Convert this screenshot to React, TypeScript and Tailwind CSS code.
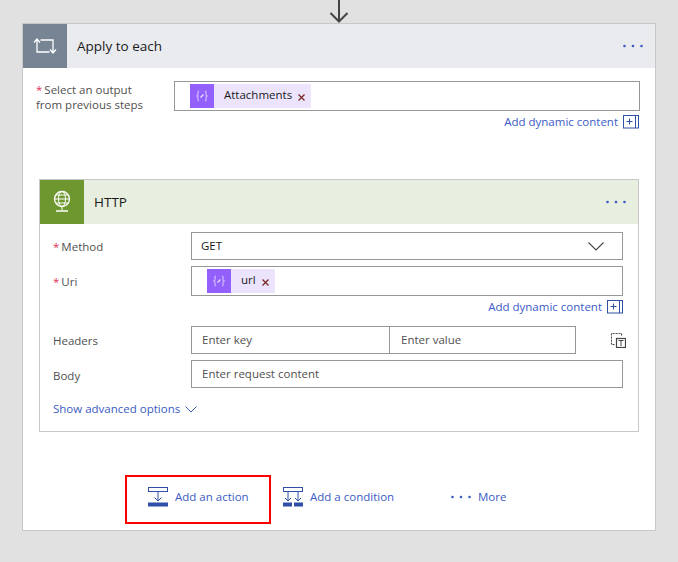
import React, { ReactNode } from 'react';

const font = 'font-["Open_Sans","Noto_Sans",sans-serif]';

const VariableIcon = (): JSX.Element => (
  <span className="flex h-6 w-6 shrink-0 items-center justify-center bg-[#9460fb]">
    <svg width="14" height="14" viewBox="0 0 14 14" fill="none" stroke="#e6dafd" strokeWidth="1">
      <path d="M4 2C2.500 2 3 4 3 5.500S2 7 1.500 7C2 7 3 7 3 8.500S2.500 12 4 12" />
      <path d="M10 2c1.500 0 1 2 1 3.500S12 7 12.500 7C12 7 11 7 11 8.500S11.500 12 10 12" />
      <path d="M5.500 8.500l3-3" strokeWidth="1.500" />
    </svg>
  </span>
);

const Token = ({ label, width }: { label: string; width: string }): JSX.Element => (
  <span className={`flex h-6 items-center bg-[#ece4fd] ${width}`}>
    <VariableIcon />
    <span className="ml-[10px] -mt-[2px] text-[11.500px] leading-none text-[#1a1a1a]">{label}</span>
    <svg className="ml-[6px] mt-[2px]" width="7" height="7" viewBox="0 0 7 7" stroke="#7a2a20" strokeWidth="1.300">
      <path d="M.5.500l6 6M6.500.500l-6 6" />
    </svg>
  </span>
);

const DynamicLink = (): JSX.Element => (
  <div className="flex h-[14px] items-center justify-end">
    <a className="text-[11.500px] leading-4 text-[#3b5cc4]">Add dynamic content</a>
    <svg className="ml-[5px]" width="16" height="14" viewBox="0 0 16 14" fill="none" stroke="#2f4fa8">
      <rect x=".5" y=".5" width="15" height="12.500" />
      <path d="M12.500.500v12.500M3.500 6.500h6M6.500 3.500v6" />
    </svg>
  </div>
);

const Label = ({ children, required }: { children: ReactNode; required?: boolean }): JSX.Element => (
  <div className="text-[11.500px] leading-[15px] text-[#505050]">
    {required && <span className="mr-[2px] text-[#e0315c]">*</span>}
    {children}
  </div>
);

const Dots = ({ className }: { className?: string }): JSX.Element => (
  <svg className={className} width="20" height="4" viewBox="0 0 20 4" fill="#3b5cc4">
    <circle cx="1.500" cy="2" r="1.300" />
    <circle cx="10" cy="2" r="1.300" />
    <circle cx="18.500" cy="2" r="1.300" />
  </svg>
);

const Field = ({ children, className }: { children?: ReactNode; className: string }): JSX.Element => (
  <div className={`flex shrink-0 items-center border border-[#979797] bg-white pl-[10px] text-[11.500px] text-[#505050] ${className}`}>
    {children}
  </div>
);

const ActionButton = ({
  icon,
  label,
  className
}: {
  icon: ReactNode;
  label: string;
  className: string;
}): JSX.Element => (
  <div className={`flex h-[49px] items-center pb-[5px] ${className}`}>
    {icon}
    <span className="text-[11.500px] text-[#3b5cc4]">{label}</span>
  </div>
);

export default function App(): JSX.Element {
  return (
    <div className={`flex min-h-screen flex-col bg-[#e1e1e1] px-[22px] ${font}`}>
      <div className="flex h-[23px] justify-center">
        <svg width="22" height="23" viewBox="0 0 22 23" fill="none" stroke="#444" strokeWidth="2">
          <path d="M11 0v21M2.500 13l8.500 8.500L19.500 13" />
        </svg>
      </div>

      <div className="h-[508px] border border-[#c8c8c8] bg-white">
        <div className="flex h-[44px] items-center bg-[#e9ebef]">
          <span className="flex h-[44px] w-[44px] items-center justify-center bg-[#768494]">
            <svg width="24" height="16" viewBox="0 0 24 16" fill="none" stroke="#fff" strokeWidth="1.300">
              <path d="M1 4.500L4 1l3 3.500M4 1.500v12.500h12.500M7.500 2H20v12.500M17 11.500l3 3.500 3-3.500" />
            </svg>
          </span>
          <span className="ml-[10px] flex-1 text-[13.500px] text-[#1a1a1a]">Apply to each</span>
          <Dots className="mr-[12px]" />
        </div>

        <div className="flex px-[13px] pt-[13px] pr-[15px]">
          <div className="w-[138px] shrink-0 pt-[1px]">
            <Label required>Select an output</Label>
            <Label>from previous steps</Label>
          </div>
          <div className="flex h-[30px] flex-1 items-center border border-[#979797] pl-[15px]">
            <Token label="Attachments" width="w-[121px]" />
          </div>
        </div>
        <div className="mt-[3px] pr-[16px]">
          <DynamicLink />
        </div>

        <div className="mx-[16px] mt-[50px] h-[253px] border border-[#c8c8c8]">
          <div className="flex h-[44px] items-center bg-[#e8eee0]">
            <span className="flex h-[44px] w-[44px] items-center justify-center bg-[#6e982f]">
              <svg width="20" height="24" viewBox="0 0 20 24" fill="none" stroke="#fff" strokeWidth="1">
                <circle cx="10" cy="9" r="7.500" strokeWidth="1.300" />
                <ellipse cx="10" cy="9" rx="3.500" ry="7.500" />
                <path d="M2.500 9h15M3.500 5h13M3.500 13h13M10 17v3" />
                <path d="M4 21h12" strokeWidth="1.500" />
              </svg>
            </span>
            <span className="ml-[10px] flex-1 text-[13.500px] text-[#1a1a1a]">HTTP</span>
            <Dots className="mr-[12px]" />
          </div>

          <div className="flex flex-col pl-[13px] pr-[15px] pt-[8px]">
            <div className="flex items-center">
              <div className="w-[138px] shrink-0">
                <Label required>Method</Label>
              </div>
              <Field className="h-[28px] flex-1 justify-between pr-[18px]">
                <span className="-ml-px text-[#1a1a1a]">GET</span>
                <svg width="16" height="9" viewBox="0 0 16 9" fill="none" stroke="#444" strokeWidth="1.100">
                  <path d="M.5.500L8 8 15.500.500" />
                </svg>
              </Field>
            </div>
            <div className="mt-[6px] flex items-center">
              <div className="w-[138px] shrink-0">
                <Label required>Uri</Label>
              </div>
              <div className="flex h-[30px] flex-1 items-center border border-[#979797] pl-[15px]">
                <Token label="url" width="w-[68px]" />
              </div>
            </div>
            <div className="mt-[4px]">
              <DynamicLink />
            </div>
            <div className="mt-[12px] flex items-center">
              <div className="w-[138px] shrink-0">
                <Label>Headers</Label>
              </div>
              <Field className="h-[28px] w-[199px]">Enter key</Field>
              <Field className="-ml-px h-[28px] w-[187px] pl-[11px]">Enter value</Field>
              <svg className="ml-[35px] shrink-0" width="15" height="15" viewBox="0 0 15 15" fill="none" stroke="#444">
                <path d="M3.500 11.500h-3V.500h10v3" strokeDasharray="2 1" />
                <rect x="5.500" y="5.500" width="9" height="9" strokeWidth="1.200" />
                <path d="M7.500 7.500h5M10 7.500v5.500" />
              </svg>
            </div>
            <div className="mt-[6px] flex items-center">
              <div className="w-[138px] shrink-0 pt-[2px]">
                <Label>Body</Label>
              </div>
              <Field className="h-[28px] flex-1">Enter request content</Field>
            </div>
            <div className="mt-[12px] flex items-center">
              <span className="text-[11.500px] leading-[18px] text-[#3b5cc4]">Show advanced options</span>
              <svg className="ml-[5px]" width="12" height="7" viewBox="0 0 12 7" fill="none" stroke="#3b5cc4">
                <path d="M.5.500L6 6 11.500.500" />
              </svg>
            </div>
          </div>
        </div>

        <div className="mt-[43px] flex items-center pl-[102px]">
          <ActionButton
            className="w-[146px] border-2 border-[#ff0000] pl-[21px]"
            label="Add an action"
            icon={
              <svg className="mr-[7px]" width="20" height="20" viewBox="0 0 20 20" fill="none" stroke="#2f4fa8">
                <rect x=".5" y=".5" width="19" height="4" />
                <path d="M10 4.500V14M6.500 10.500L10 14l3.500-3.500" />
                <path d="M0 17.500h20" strokeWidth="4" />
              </svg>
            }
          />
          <ActionButton
            className="ml-[12px] w-[168px]"
            label="Add a condition"
            icon={
              <svg className="mr-[7px]" width="20" height="20" viewBox="0 0 20 20" fill="none" stroke="#2f4fa8">
                <rect x=".5" y=".5" width="19" height="4" />
                <path d="M5 4.500V14M2 11l3 3 3-3M15 4.500V14M12 11l3 3 3-3" />
                <path d="M0 17.500h9M11 17.500h9" strokeWidth="4" />
              </svg>
            }
          />
          <ActionButton className="" label="More" icon={<Dots className="mr-[7px]" />} />
        </div>
      </div>
    </div>
  );
}
